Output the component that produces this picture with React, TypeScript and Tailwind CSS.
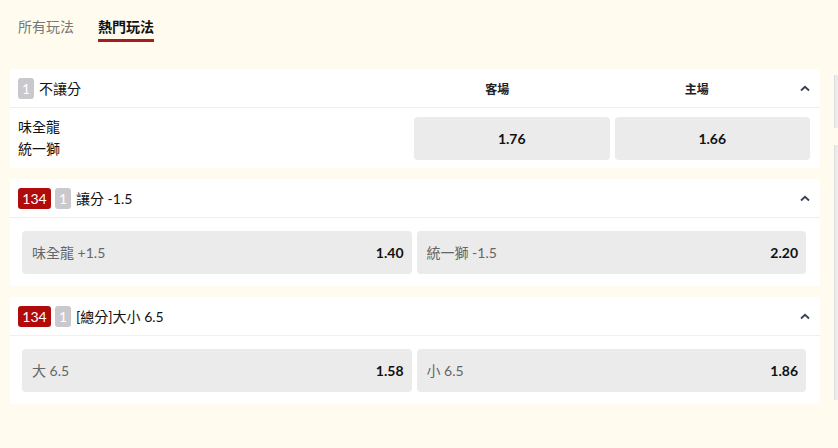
import React from 'react';

const FONT = "font-['Lato','Noto_Sans_CJK_TC',sans-serif]";

const ChevronUp = () => (
  <svg width="10" height="7" viewBox="0 0 10 7" className="text-gray-700">
    <path d="M1 5.5 L5 1.8 L9 5.5" fill="none" stroke="currentColor" strokeWidth="1.8" />
  </svg>
);

const Badge: React.FC<{ value: string; red?: boolean }> = ({ value, red }) => (
  <span
    className={`inline-flex h-[21px] items-center justify-center rounded-[3px] text-[14px] text-white ${
      red ? 'w-[33px] bg-[#b00a0a]' : 'w-[16px] bg-[#c9c9cd]'
    }`}
  >
    {value}
  </span>
);

const Header: React.FC<{ hot?: boolean; title: string; children?: React.ReactNode }> = ({ hot, title, children }) => (
  <div className="flex h-[39px] items-center border-b border-[#efefef] pl-2 pr-[10px]">
    <div className="flex items-center gap-1 flex-1">
      {hot && <Badge value="134" red />}
      <Badge value="1" />
      <span className="ml-[1px] text-[14px] text-[#111]">{title}</span>
    </div>
    {children}
    <div className="flex w-[14px] justify-end">
      <ChevronUp />
    </div>
  </div>
);

const Odd: React.FC<{ label: string; odd: string }> = ({ label, odd }) => (
  <div className="flex h-[43px] flex-1 items-center justify-between rounded-[4px] bg-[#ebebeb] pl-[10px] pr-2">
    <span className="text-[14px] text-[#666]">{label}</span>
    <span className="text-[14px] font-bold text-[#111]">{odd}</span>
  </div>
);

const App: React.FC = () => {
  return (
    <div className={`${FONT} flex h-[448px] w-[838px] overflow-hidden bg-[#fffcef]`}>
      <div className="w-[820px] pl-[10px]">
        <div className="flex h-[69px] items-start gap-6 pl-2 pt-[16px]">
          <span className="text-[14px] text-[#777]">所有玩法</span>
          <span className="border-b-[3px] border-[#a51c1c] pb-[2px] text-[14px] font-bold text-[#111]">熱門玩法</span>
        </div>

        <div className="bg-white">
          <Header title="不讓分">
            <div className="flex w-[396px] gap-[5px] pr-[2px] pt-[3px]">
              <span className="flex-1 text-center text-[12px] font-bold text-[#222]">客場</span>
              <span className="flex-1 text-center text-[12px] font-bold text-[#222]">主場</span>
            </div>
          </Header>
          <div className="flex items-center pb-2 pl-2 pr-[10px] pt-2">
            <div className="flex-1 text-[14px] leading-[22px] text-[#111]">
              <div>味全龍</div>
              <div>統一獅</div>
            </div>
            <div className="flex w-[396px] gap-[5px]">
              <div className="flex h-[43px] flex-1 items-center justify-center rounded-[4px] bg-[#ebebeb] text-[14px] font-bold text-[#111]">1.76</div>
              <div className="flex h-[43px] flex-1 items-center justify-center rounded-[4px] bg-[#ebebeb] text-[14px] font-bold text-[#111]">1.66</div>
            </div>
          </div>
        </div>

        <div className="mt-[11px] bg-white">
          <Header hot title="讓分 -1.5" />
          <div className="flex gap-[5px] pb-3 pl-3 pr-[14px] pt-[13px]">
            <Odd label="味全龍 +1.5" odd="1.40" />
            <Odd label="統一獅 -1.5" odd="2.20" />
          </div>
        </div>

        <div className="mt-[11px] bg-white">
          <Header hot title="[總分]大小 6.5" />
          <div className="flex gap-[5px] pb-3 pl-3 pr-[14px] pt-[13px]">
            <Odd label="大 6.5" odd="1.58" />
            <Odd label="小 6.5" odd="1.86" />
          </div>
        </div>
      </div>

      <div className="ml-[14px] flex-1 pt-[75px]">
        <div className="h-[53px] border-l border-[#ddd] bg-[#ececec]" />
        <div className="mt-[17px] h-[255px] border-l border-[#ddd] bg-[#ececec]" />
      </div>
    </div>
  );
};

export default App;
